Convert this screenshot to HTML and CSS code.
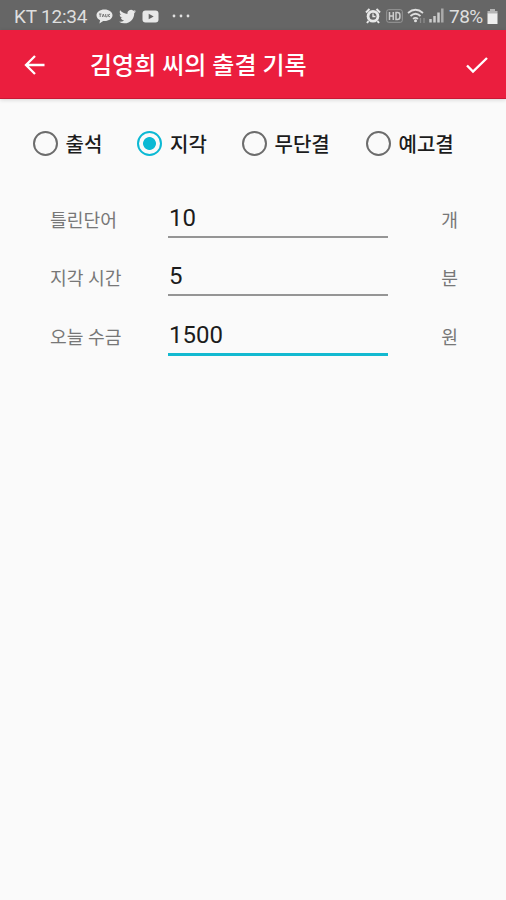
FILE: index.html
```html
<!DOCTYPE html>
<html lang="ko">
<head>
<meta charset="utf-8">
<title>출결 기록</title>
<link rel="stylesheet" href="styles.css">
</head>
<body>
<div class="status">
  <span class="carrier">KT 12:34</span>
  <svg class="talk" width="17" height="15" viewBox="0 0 17 15"><path fill="#e8e8e8" d="M8.500 .5C4 .5.5 3 .5 6.300c0 2.100 1.400 4 3.600 5L3.400 14.500l3.800-2.500 1.300.1c4.500 0 8-2.500 8-5.800S13 .5 8.500.5z"/><path d="M3 5h2.500M4.200 5v3M6.300 8l1-3 1 3M9.700 5v2.800h1.300M12 5v3M14 5l-1.800 1.500L14 8" fill="none" stroke="#777"/></svg>
  <svg class="bird" width="17" height="15" viewBox="0 2 24 20"><path fill="#e8e8e8" d="M24 4.600c-.9.400-1.800.7-2.800.8 1-.6 1.800-1.600 2.200-2.700-1 .6-2 1-3.100 1.200A4.900 4.900 0 0 0 12 8.300C7.700 8.100 4.100 6.100 1.700 3.100.4 5.300 1 8.200 3.200 9.700c-.8 0-1.600-.2-2.200-.6 0 2.300 1.600 4.400 3.900 4.900-.7.200-1.500.2-2.200.1.600 2 2.400 3.400 4.600 3.400A9.900 9.900 0 0 1 0 19.500 13.900 13.900 0 0 0 7.500 21.700c9.200 0 14.300-7.700 14-14.600 1-.7 1.800-1.600 2.500-2.500z"/></svg>
  <svg class="tube" width="17" height="13" viewBox="0 0 17 13"><rect x=".5" y=".5" width="16" height="12" rx="3" fill="#e8e8e8"/><path fill="#666" d="M6.700 3.700v5.600l5-2.800z"/></svg>
  <svg class="dots" width="18" height="4" viewBox="0 0 18 4"><g fill="#e0e0e0"><circle cx="2" cy="2" r="1.400"/><circle cx="9" cy="2" r="1.400"/><circle cx="16" cy="2" r="1.400"/></g></svg>
  <div class="right">
    <svg class="alarm" width="16" height="16" viewBox="0 0 16 16"><circle cx="8" cy="8.300" r="6.300" fill="#e8e8e8"/><path d="M1 4.500L4.500 1M15 4.500L11.500 1M3.500 13L2 15M12.500 13l1.500 2" stroke="#e8e8e8" stroke-width="2"/><circle cx="8" cy="8.300" r="3.500" fill="#666"/><path d="M8 5.500v3h2.500" fill="none" stroke="#e8e8e8" stroke-width="1.300"/></svg>
    <svg class="hd" width="17" height="14" viewBox="0 0 17 14"><rect x=".7" y=".7" width="15.600" height="12.600" rx="2" fill="none" stroke="#999"/><path d="M3.500 3v8M7.300 3v8M3.500 7h3.800M10 3.500v7h1.500q2.400 0 2.400-2.500v-2q0-2.500-2.400-2.500z" fill="none" stroke="#ccc" stroke-width="1.500"/></svg>
    <svg class="wifi" width="20" height="16" viewBox="0 0 20 16"><path d="M1 5Q8.500-1.500 16 5M3.500 8Q8.500 3.500 13.500 8M6 10.800q2.500-2 5 0" fill="none" stroke="#dedede" stroke-width="1.700"/><circle cx="8.500" cy="12.800" r="1.500" fill="#dedede"/><path d="M13.500 10v5M17 10v5" stroke="#8c8c8c" stroke-width="1.300"/></svg>
    <svg class="signal" width="15" height="15" viewBox="0 0 15 15"><path d="M1.500 11v3.500M5.500 8v6.500M9.500 4.500v10" stroke="#ccc" stroke-width="2.500"/><path d="M13.300 .5v14" stroke="#aaa" stroke-width="2.500"/></svg>
    <span class="percent">78%</span>
    <svg class="battery" width="11" height="15" viewBox="0 0 11 15"><path fill="#b5b5b5" d="M3 0h5v2h2.500v3H.5V2H3z"/><path fill="#eee" d="M.5 4.500h10V15H.5z"/></svg>
  </div>
</div>
<header class="bar">
  <svg class="back" width="22" height="22" viewBox="0 0 22 22"><path d="M20.500 11H2.500M11 2L2 11l9 9" fill="none" stroke="#fff" stroke-width="2.300"/></svg>
  <h1>김영희 씨의 출결 기록</h1>
  <svg class="check" width="24" height="18" viewBox="0 0 24 18"><path d="M2 9.500l6 6L22 2" fill="none" stroke="#fff" stroke-width="2.400"/></svg>
</header>
<main>
  <div class="options">
    <label><i class="radio"></i>출석</label>
    <label><i class="radio on"></i>지각</label>
    <label><i class="radio"></i>무단결</label>
    <label><i class="radio"></i>예고결</label>
  </div>
  <div class="fields">
    <div class="row"><span>틀린단어</span><div class="input">10</div><span class="unit">개</span></div>
    <div class="row"><span>지각 시간</span><div class="input">5</div><span class="unit">분</span></div>
    <div class="row"><span>오늘 수금</span><div class="input active">1500</div><span class="unit">원</span></div>
  </div>
</main>
</body>
</html>
```
FILE: styles.css
```css
* { box-sizing: border-box; }
body {
  margin: 0;
  height: 900px;
  overflow: hidden;
  background: #fafafa;
  color: #1c1c1c;
  font-family: Roboto, "Noto Sans CJK KR", sans-serif;
}
svg { display: block; flex: none; }
.status {
  display: flex;
  align-items: center;
  height: 30px;
  padding: 2px 8px 0 14px;
  background: #666;
  color: #dedede;
  font-size: 19px;
  line-height: 28px;
}
.carrier { width: 82px; padding-top: 1px; letter-spacing: -0.2px; white-space: nowrap; }
.bird { margin-left: 6px; }
.tube { margin-left: 6px; }
.dots { margin-left: 13px; }
.right { display: flex; align-items: center; margin-left: auto; }
.alarm, .hd, .wifi, .signal { margin-bottom: 1px; }
.hd { margin-left: 5px; }
.wifi { margin-left: 4px; }
.signal { margin-left: 2px; }
.percent { width: 34px; margin-left: 5px; padding-top: 1px; letter-spacing: -0.5px; }
.battery { margin-left: 4px; }
.bar {
  display: flex;
  align-items: center;
  height: 69px;
  padding: 1px 17px 0 24px;
  background: #eb1e3e;
  border-bottom: 1px solid #c91835;
  box-shadow: 0 1px 4px rgba(0, 0, 0, .15);
  color: #fff;
}
h1 {
  margin: 0 0 0 44px;
  padding-top: 3px;
  font-size: 24px;
  font-weight: 500;
  line-height: 36px;
  white-space: nowrap;
}
.check { margin-left: auto; }
.options {
  display: grid;
  grid-template-columns: 104.500px 104.500px 124px 110px;
  padding: 29px 0 0 32.500px;
}
.options label {
  display: flex;
  align-items: center;
  height: 30px;
  font-size: 20px;
  font-weight: 500;
  white-space: nowrap;
}
.radio {
  flex: none;
  width: 25px;
  height: 25px;
  margin-right: 8px;
  border: 2.500px solid #6c6c6c;
  border-radius: 50%;
}
.radio.on {
  border-color: #0bb9d4;
  background: radial-gradient(circle, #0bb9d4 6px, transparent 6.800px);
}
.fields { padding: 38px 48px 0 50px; }
.row {
  display: grid;
  grid-template-columns: 118px 220px 1fr;
  height: 58.400px;
  color: #777;
  font-size: 18.200px;
  line-height: 49px;
}
.input {
  height: 41.500px;
  padding-left: 1px;
  border-bottom: 2px solid #959595;
  color: #1c1c1c;
  font-size: 24px;
  line-height: 44px;
}
.input.active { height: 43px; border-bottom: 3px solid #12b9d0; }
.unit { text-align: right; }
```
